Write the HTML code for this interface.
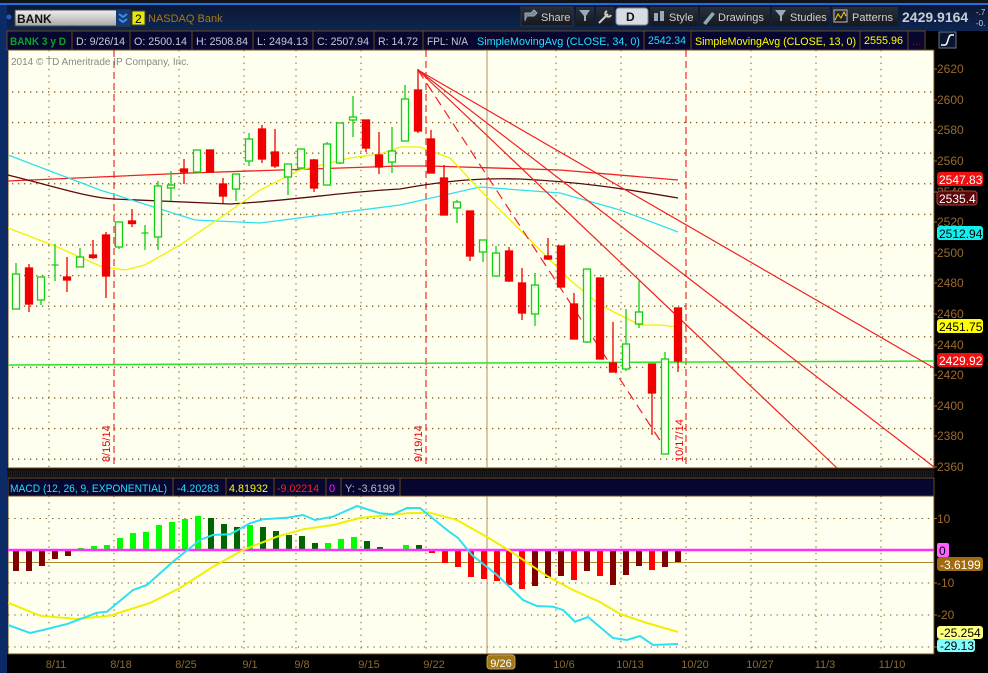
<!DOCTYPE html>
<html><head><meta charset="utf-8"><style>
body{margin:0;width:988px;height:673px;overflow:hidden;background:#000;font-family:"Liberation Sans",sans-serif}
svg{display:block}
</style></head><body>
<svg width="988" height="673" viewBox="0 0 988 673" font-family="Liberation Sans, sans-serif">
<defs>
<linearGradient id="tb" x1="0" y1="0" x2="0" y2="1"><stop offset="0" stop-color="#0b1630"/><stop offset="1" stop-color="#0d2550"/></linearGradient>
<linearGradient id="sym" x1="0" y1="0" x2="0" y2="1"><stop offset="0" stop-color="#f0f0f0"/><stop offset="1" stop-color="#a8a8a8"/></linearGradient>
<linearGradient id="btn" x1="0" y1="0" x2="0" y2="1"><stop offset="0" stop-color="#2a2f38"/><stop offset="1" stop-color="#15181e"/></linearGradient>
<pattern id="hd" width="6" height="30.6" patternUnits="userSpaceOnUse"><rect x="0" y="0" width="1.3" height="1.3" fill="#7a5418"/></pattern>
</defs>
<!-- top bar -->
<rect x="0" y="0" width="988" height="31" fill="url(#tb)"/>
<rect x="0" y="0" width="988" height="3" fill="#101418"/>
<rect x="0" y="3" width="988" height="2" fill="#1f6fe0"/>
<rect x="0" y="5" width="7" height="668" fill="#0b2a66"/>
<circle cx="9" cy="17" r="2.5" fill="#1f5fc0"/>
<rect x="15" y="10" width="115" height="16" fill="url(#sym)" stroke="#444"/>
<text x="17" y="23" font-size="12" font-weight="bold" fill="#111">BANK</text>
<rect x="116" y="10" width="14" height="16" fill="#163a70"/>
<path d="M119 14l4 3 4-3M119 19l4 3 4-3" stroke="#3a8ef0" stroke-width="2" fill="none"/>
<rect x="132" y="11" width="13" height="14" fill="#e8e800" stroke="#444"/>
<text x="135" y="23" font-size="12" fill="#000">2</text>
<text x="148" y="22" font-size="11" fill="#a87818">NASDAQ Bank</text>
<g font-size="11" fill="#d0d0d0">
<rect x="521" y="7" width="52" height="19" fill="url(#btn)" stroke="#333"/><path d="M525 21v-8h6l3-3 3 3-3 3h-6" stroke="#9ab" fill="#789" /><text x="541" y="21">Share</text>
<rect x="576" y="7" width="18" height="19" fill="url(#btn)"/><path d="M579 10h11l-4 6v5h-2v-5z" fill="#9ab"/>
<rect x="596" y="7" width="18" height="19" fill="url(#btn)"/><path d="M599 23l9-9m-1-3a3 3 0 1 0 4 4" stroke="#ccc" stroke-width="2" fill="none"/>
<rect x="616" y="8" width="32" height="17" rx="3" fill="#d8dde4" stroke="#888"/><text x="626" y="21" font-size="12" font-weight="bold" fill="#111">D</text>
<rect x="650" y="7" width="48" height="19" fill="url(#btn)"/><rect x="654" y="13" width="4" height="8" fill="#9ab"/><rect x="660" y="11" width="4" height="10" fill="#9ab"/><text x="669" y="21">Style</text>
<rect x="700" y="7" width="70" height="19" fill="url(#btn)"/><path d="M703 23l9-11 3 2-9 11z" fill="#8ab"/><text x="718" y="21">Drawings</text>
<rect x="772" y="7" width="58" height="19" fill="url(#btn)"/><path d="M775 10h11l-4 6v5h-2v-5z" fill="#9ab"/><text x="790" y="21">Studies</text>
<rect x="832" y="7" width="66" height="19" fill="url(#btn)"/><rect x="834" y="10" width="13" height="12" fill="none" stroke="#bbb"/><path d="M835 20l3-6 3 4 3-6 2 4" stroke="#fc0" fill="none"/><text x="852" y="21">Patterns</text>
</g>
<text x="902" y="22" font-size="14" font-weight="bold" fill="#c8ccd4">2429.9164</text>
<text x="976" y="15" font-size="8" fill="#ccc">-.7</text><text x="976" y="26" font-size="8" fill="#ccc">-0.</text>
<!-- info bar -->
<rect x="7" y="31" width="918" height="19" fill="#06062e" stroke="#6b4a1a"/>
<g stroke="#6b4a1a"><path d="M72 31v19M130 31v19M192 31v19M253 31v19M313 31v19M374 31v19M423 31v19M644 31v19M691 31v19M860 31v19M908 31v19"/></g>
<g font-size="11">
<text x="10" y="45" fill="#10a030" font-weight="bold" textLength="56" lengthAdjust="spacingAndGlyphs">BANK 3 y D</text>
<g fill="#c8c8d8"><text x="76" y="45" textLength="49" lengthAdjust="spacingAndGlyphs">D: 9/26/14</text><text x="134" y="45" textLength="53" lengthAdjust="spacingAndGlyphs">O: 2500.14</text><text x="196" y="45" textLength="52" lengthAdjust="spacingAndGlyphs">H: 2508.84</text><text x="257" y="45" textLength="51" lengthAdjust="spacingAndGlyphs">L: 2494.13</text><text x="317" y="45" textLength="52" lengthAdjust="spacingAndGlyphs">C: 2507.94</text><text x="378" y="45" textLength="40" lengthAdjust="spacingAndGlyphs">R: 14.72</text><text x="427" y="45" textLength="41" lengthAdjust="spacingAndGlyphs">FPL: N/A</text></g>
<text x="477" y="45" fill="#22e0ff" textLength="163" lengthAdjust="spacingAndGlyphs">SimpleMovingAvg (CLOSE, 34, 0)</text>
<text x="648" y="44" fill="#22e0ff" textLength="38" lengthAdjust="spacingAndGlyphs">2542.34</text>
<text x="695" y="45" fill="#ffff00" textLength="161" lengthAdjust="spacingAndGlyphs">SimpleMovingAvg (CLOSE, 13, 0)</text>
<text x="864" y="44" fill="#ffff00" textLength="39" lengthAdjust="spacingAndGlyphs">2555.96</text>
<text x="912" y="45" fill="#a00">...</text>
</g>
<rect x="939" y="32" width="17" height="16" fill="#0a1530" stroke="#678"/><path d="M941 45h4c3 0 3-10 6-10h3" stroke="#fff" stroke-width="1.5" fill="none"/>
<!-- price chart -->
<rect x="8" y="50" width="926" height="418" fill="#fffff0" stroke="#6b4a1a"/>
<rect x="8" y="69" width="926" height="400" fill="url(#hd)" transform="translate(0,-0.5)"/>
<g stroke="#7a5418" stroke-dasharray="1.3 5"><path d="M49 50v418M179 50v418M244 50v418M296 50v418M361 50v418M556 50v418M621 50v418M751 50v418M816 50v418M881 50v418"/></g>
<g stroke="#e00" stroke-dasharray="7 4"><path d="M114 50v418M426 50v418M686 50v418"/></g>
<path d="M487 50v418" stroke="#b09060"/>
<text x="11" y="65" font-size="10" fill="#888">2014 © TD Ameritrade IP Company, Inc.</text>
<g font-size="11" fill="#e00">
<text transform="translate(110,462) rotate(-90)">8/15/14</text>
<text transform="translate(422,462) rotate(-90)">9/19/14</text>
<text transform="translate(683,462) rotate(-90)">10/17/14</text>
</g>
<!-- MAs -->
<g fill="none" stroke-width="1.3">
<path d="M8 181L190 173L400 166L430 166L560 170L678 180" stroke="#f02020"/>
<path d="M8 175C60 188 90 198 114 199L230 204C300 200 340 192 400 189C450 180 480 178 520 179C580 182 620 188 678 198" stroke="#5a0c0c"/>
<path d="M8 155L100 190L195 220L260 223L400 205L480 187L560 193L620 210L678 232" stroke="#30e0f0"/>
<path d="M8 228L55 246L100 266L125 270L145 265L180 245L220 218L260 190L300 170L350 158L380 154L400 147L420 147L450 158L480 190L510 220L540 250L570 280L600 305L620 315L640 325L660 325L678 327" stroke="#f0f000"/>
</g>
<path d="M8 365L934 361" stroke="#30e030" stroke-width="1.5"/>
<g stroke="#f02020" stroke-width="1.2" fill="none">
<path d="M418 70L934 368"/><path d="M418 70L934 467"/><path d="M418 70L837 468"/>
<path d="M418 70L665 448" stroke-dasharray="10 6"/>
</g>
<!-- candles -->
<g stroke="#10d010" stroke-width="1.3" fill="#fffff0">
<path d="M16 263v11M41 300v5M55 244v37M80 248v9M119 247v2M145 225v25M158 181v5M158 237v13M171 171v14M171 188v13M236 189v12M249 133v6M249 161v5M288 177v18M327 142v2M340 163v1M353 96v21M353 120v17M392 127v24M392 162v11M405 85v14M457 200v2M457 208v15M483 252v10M496 246v7M535 273v12M535 314v12M587 342v1M626 309v35M626 369v2M639 281v31M639 324v4M665 352v7" fill="none"/>
<rect x="12.5" y="274" width="7" height="35"/><rect x="37.5" y="277" width="7" height="23"/><path d="M51.5 265h7M141.5 233h7"/><rect x="76.5" y="257" width="7" height="10"/><rect x="115.5" y="222" width="7" height="25"/><rect x="154.5" y="186" width="7" height="51"/><rect x="167.5" y="185" width="7" height="3"/><rect x="193.5" y="150" width="7" height="22"/><rect x="232.5" y="174" width="7" height="15"/><rect x="245.5" y="139" width="7" height="22"/><rect x="284.5" y="164" width="7" height="13"/><rect x="297.5" y="149" width="7" height="19"/><rect x="323.5" y="144" width="7" height="41"/><rect x="336.5" y="123" width="7" height="40"/><rect x="349.5" y="117" width="7" height="3"/><rect x="388.5" y="151" width="7" height="11"/><rect x="401.5" y="99" width="7" height="42"/><rect x="453.5" y="202" width="7" height="6"/><rect x="479.5" y="240" width="7" height="12"/><rect x="492.5" y="253" width="7" height="23"/><rect x="531.5" y="285" width="7" height="29"/><rect x="583.5" y="269" width="7" height="73"/><rect x="622.5" y="344" width="7" height="25"/><rect x="635.5" y="312" width="7" height="12"/><rect x="661.5" y="359" width="7" height="95"/>
</g>
<g stroke="#f00000" stroke-width="1.3" fill="#f00000">
<path d="M29 264v48M67 257v35M93 240v19M106 232v66M132 209v18M184 159v25M223 178v25M262 125v38M275 129v39M314 159v33M366 120v32M379 132v42M418 69v64M431 130v43M444 165v50M470 211v50M509 247v35M522 268v52M548 238v22M561 246v41M574 293v46M600 278v81M613 322v50M652 364v71M678 308v64" fill="none"/>
<rect x="25.5" y="268" width="7" height="36"/><rect x="63.5" y="277" width="7" height="3"/><rect x="89.5" y="255" width="7" height="2.5"/><rect x="102.5" y="235" width="7" height="41"/><rect x="128.5" y="221" width="7" height="2.5"/><rect x="180.5" y="169" width="7" height="3"/><rect x="206.5" y="150" width="7" height="22"/><rect x="219.5" y="184" width="7" height="12"/><rect x="258.5" y="129" width="7" height="30"/><rect x="271.5" y="152" width="7" height="14"/><rect x="310.5" y="160" width="7" height="28"/><rect x="362.5" y="120" width="7" height="28"/><rect x="375.5" y="155" width="7" height="12"/><rect x="414.5" y="90" width="7" height="41"/><rect x="427.5" y="139" width="7" height="34"/><rect x="440.5" y="178" width="7" height="37"/><rect x="466.5" y="211" width="7" height="45"/><rect x="505.5" y="251" width="7" height="30"/><rect x="518.5" y="283" width="7" height="30"/><rect x="544.5" y="256" width="7" height="3"/><rect x="557.5" y="246" width="7" height="41"/><rect x="570.5" y="304" width="7" height="35"/><rect x="596.5" y="278" width="7" height="81"/><rect x="609.5" y="363" width="7" height="9"/><rect x="648.5" y="364" width="7" height="29"/><rect x="674.5" y="308" width="7" height="53"/>
</g>
<!-- price axis -->
<g font-size="12" fill="#9a6a2a" stroke="none">
<text x="937" y="73">2620</text><text x="937" y="104">2600</text><text x="937" y="134">2580</text><text x="937" y="165">2560</text><text x="937" y="196">2540</text><text x="937" y="226">2520</text><text x="937" y="257">2500</text><text x="937" y="287">2480</text><text x="937" y="318">2460</text><text x="937" y="349">2440</text><text x="937" y="379">2420</text><text x="937" y="410">2400</text><text x="937" y="440">2380</text><text x="937" y="471">2360</text>
</g>
<g stroke="#9a6a2a"><path d="M934 69h3M934 100h3M934 130h3M934 161h3M934 192h3M934 222h3M934 253h3M934 283h3M934 314h3M934 345h3M934 375h3M934 406h3M934 436h3M934 467h3"/></g>
<g font-size="12">
<rect x="937" y="172" width="46" height="14" rx="3" fill="#f01010"/><text x="939" y="184" fill="#fff">2547.83</text>
<rect x="937" y="191" width="40" height="14" rx="3" fill="#5a0808" stroke="#a44"/><text x="939" y="203" fill="#fff">2535.4</text>
<rect x="937" y="226" width="46" height="14" rx="3" fill="#10f0f0"/><text x="939" y="238" fill="#000">2512.94</text>
<rect x="937" y="319" width="46" height="14" rx="3" fill="#ffff00"/><text x="939" y="331" fill="#000">2451.75</text>
<rect x="937" y="353" width="46" height="14" rx="3" fill="#f01010"/><text x="939" y="365" fill="#fff">2429.92</text>
</g>
<!-- separator -->
<rect x="7" y="469" width="927" height="9" fill="#111"/>
<path d="M7 472h927M7 475h927" stroke="#333" stroke-dasharray="1 1"/>
<!-- MACD header -->
<rect x="8" y="478" width="926" height="18" fill="#06062e" stroke="#6b4a1a"/>
<g stroke="#6b4a1a"><path d="M173 478v18M226 478v18M274 478v18M326 478v18M341 478v18M400 478v18"/></g>
<g font-size="11">
<text x="10" y="492" fill="#22e0ff" textLength="157" lengthAdjust="spacingAndGlyphs">MACD (12, 26, 9, EXPONENTIAL)</text>
<text x="177" y="492" fill="#22e0ff" textLength="42" lengthAdjust="spacingAndGlyphs">-4.20283</text>
<text x="229" y="492" fill="#ffff00" textLength="39" lengthAdjust="spacingAndGlyphs">4.81932</text>
<text x="277" y="492" fill="#ff2020" textLength="42" lengthAdjust="spacingAndGlyphs">-9.02214</text>
<text x="329" y="492" fill="#ff20ff">0</text>
<text x="345" y="492" fill="#b8b8c8" textLength="50" lengthAdjust="spacingAndGlyphs">Y: -3.6199</text>
</g>
<!-- MACD panel -->
<rect x="8" y="496" width="926" height="158" fill="#fffff0" stroke="#6b4a1a"/>
<g stroke="#7a5418" stroke-dasharray="1.3 5"><path d="M8 518.5h926M8 583h926M8 615h926M8 647h926M49 496v158M114 496v158M179 496v158M244 496v158M296 496v158M361 496v158M426 496v158M556 496v158M621 496v158M686 496v158M751 496v158M816 496v158M881 496v158"/></g>
<path d="M487 496v158" stroke="#b09060"/>
<path d="M8 562.5h926" stroke="#b08830"/>
<g stroke-width="6">
<g stroke="#800000"><path d="M16 550V571M29 550V571M42 550V566M55 550V559M68 550V556M613 550V585M535 550V586M548 550V578M561 550V576M587 550V571M626 550V575M639 550V566M665 550V567M678 550V562"/></g>
<g stroke="#00ff00"><path d="M81 550V548M94 550V546M107 550V545M120 550V538M133 550V533M146 550V532M159 550V525M172 550V522M185 550V519M198 550V516M250 550V525M328 550V543M341 550V539M354 550V537M406 550V545"/></g>
<g stroke="#006400"><path d="M211 550V518M224 550V524M237 550V527M263 550V527M276 550V531M289 550V535M302 550V536M315 550V543M367 550V541M380 550V547M393 550V549M419 550V545"/></g>
<g stroke="#ff0000"><path d="M432 550V553M445 550V563M458 550V567M471 550V577M484 550V579M497 550V581M509 550V585M522 550V589M574 550V580M600 550V576M652 550V570"/></g>
</g>
<path d="M8 550h926" stroke="#ff30ff" stroke-width="2.5"/>
<g fill="none" stroke-width="2">
<path d="M8 602.7L40 615.7L77 619L110 615.7L150 603L180 588L213 566.7L243 550L277 536.7L303 529.3L333 525L360 518L380 516L407 513.3L430 512.7L457 520L487 537L510 551L547 576L573 590L600 602L620 614L647 623L678 632" stroke="#f0f000"/>
<path d="M8 625L30 633L43 630L67 624L97 612.7L107 611.7L133 590L147 585L173 561.7L200 540L213 535L230 534.3L250 523.3L263 519.3L287 517.7L303 515L315 520L333 516.7L357 506L380 513.3L393 514.3L407 508L420 508L447 530L458 538L472 555L497 575L523 600L537 606L553 606.7L563 610L575 621.7L588 617L613 638L627 640L640 636L653 645L678 644" stroke="#30e0f0"/>
</g>
<!-- MACD axis -->
<g font-size="12" fill="#9a6a2a"><text x="937" y="523">10</text><text x="937" y="587">-10</text><text x="937" y="619">-20</text></g>
<g stroke="#9a6a2a"><path d="M934 518.5h3M934 583h3M934 615h3M934 647h3"/></g>
<g font-size="12">
<rect x="937" y="543" width="12" height="14" rx="2" fill="#ff60ff"/><text x="939" y="555" fill="#000">0</text>
<rect x="937" y="557" width="46" height="14" rx="3" fill="#a06a10"/><text x="940" y="569" fill="#fff">-3.6199</text>
<rect x="937" y="626" width="46" height="13" rx="3" fill="#ffff80"/><text x="940" y="637" fill="#000">-25.254</text>
<rect x="937" y="639" width="38" height="13" rx="3" fill="#80ffff"/><text x="940" y="650" fill="#000">-29.13</text>
</g>
<!-- date axis -->
<g font-size="11" fill="#8a6a30" text-anchor="middle">
<text x="56" y="668">8/11</text><text x="121" y="668">8/18</text><text x="186" y="668">8/25</text><text x="250" y="668">9/1</text><text x="302" y="668">9/8</text><text x="369" y="668">9/15</text><text x="434" y="668">9/22</text><text x="564" y="668">10/6</text><text x="630" y="668">10/13</text><text x="695" y="668">10/20</text><text x="760" y="668">10/27</text><text x="825" y="668">11/3</text><text x="892" y="668">11/10</text>
</g>
<rect x="487" y="655" width="28" height="14" rx="3" fill="#a07818" stroke="#c8a050"/>
<text x="501" y="667" font-size="11" fill="#fff" text-anchor="middle">9/26</text>
</svg>
</body></html>
